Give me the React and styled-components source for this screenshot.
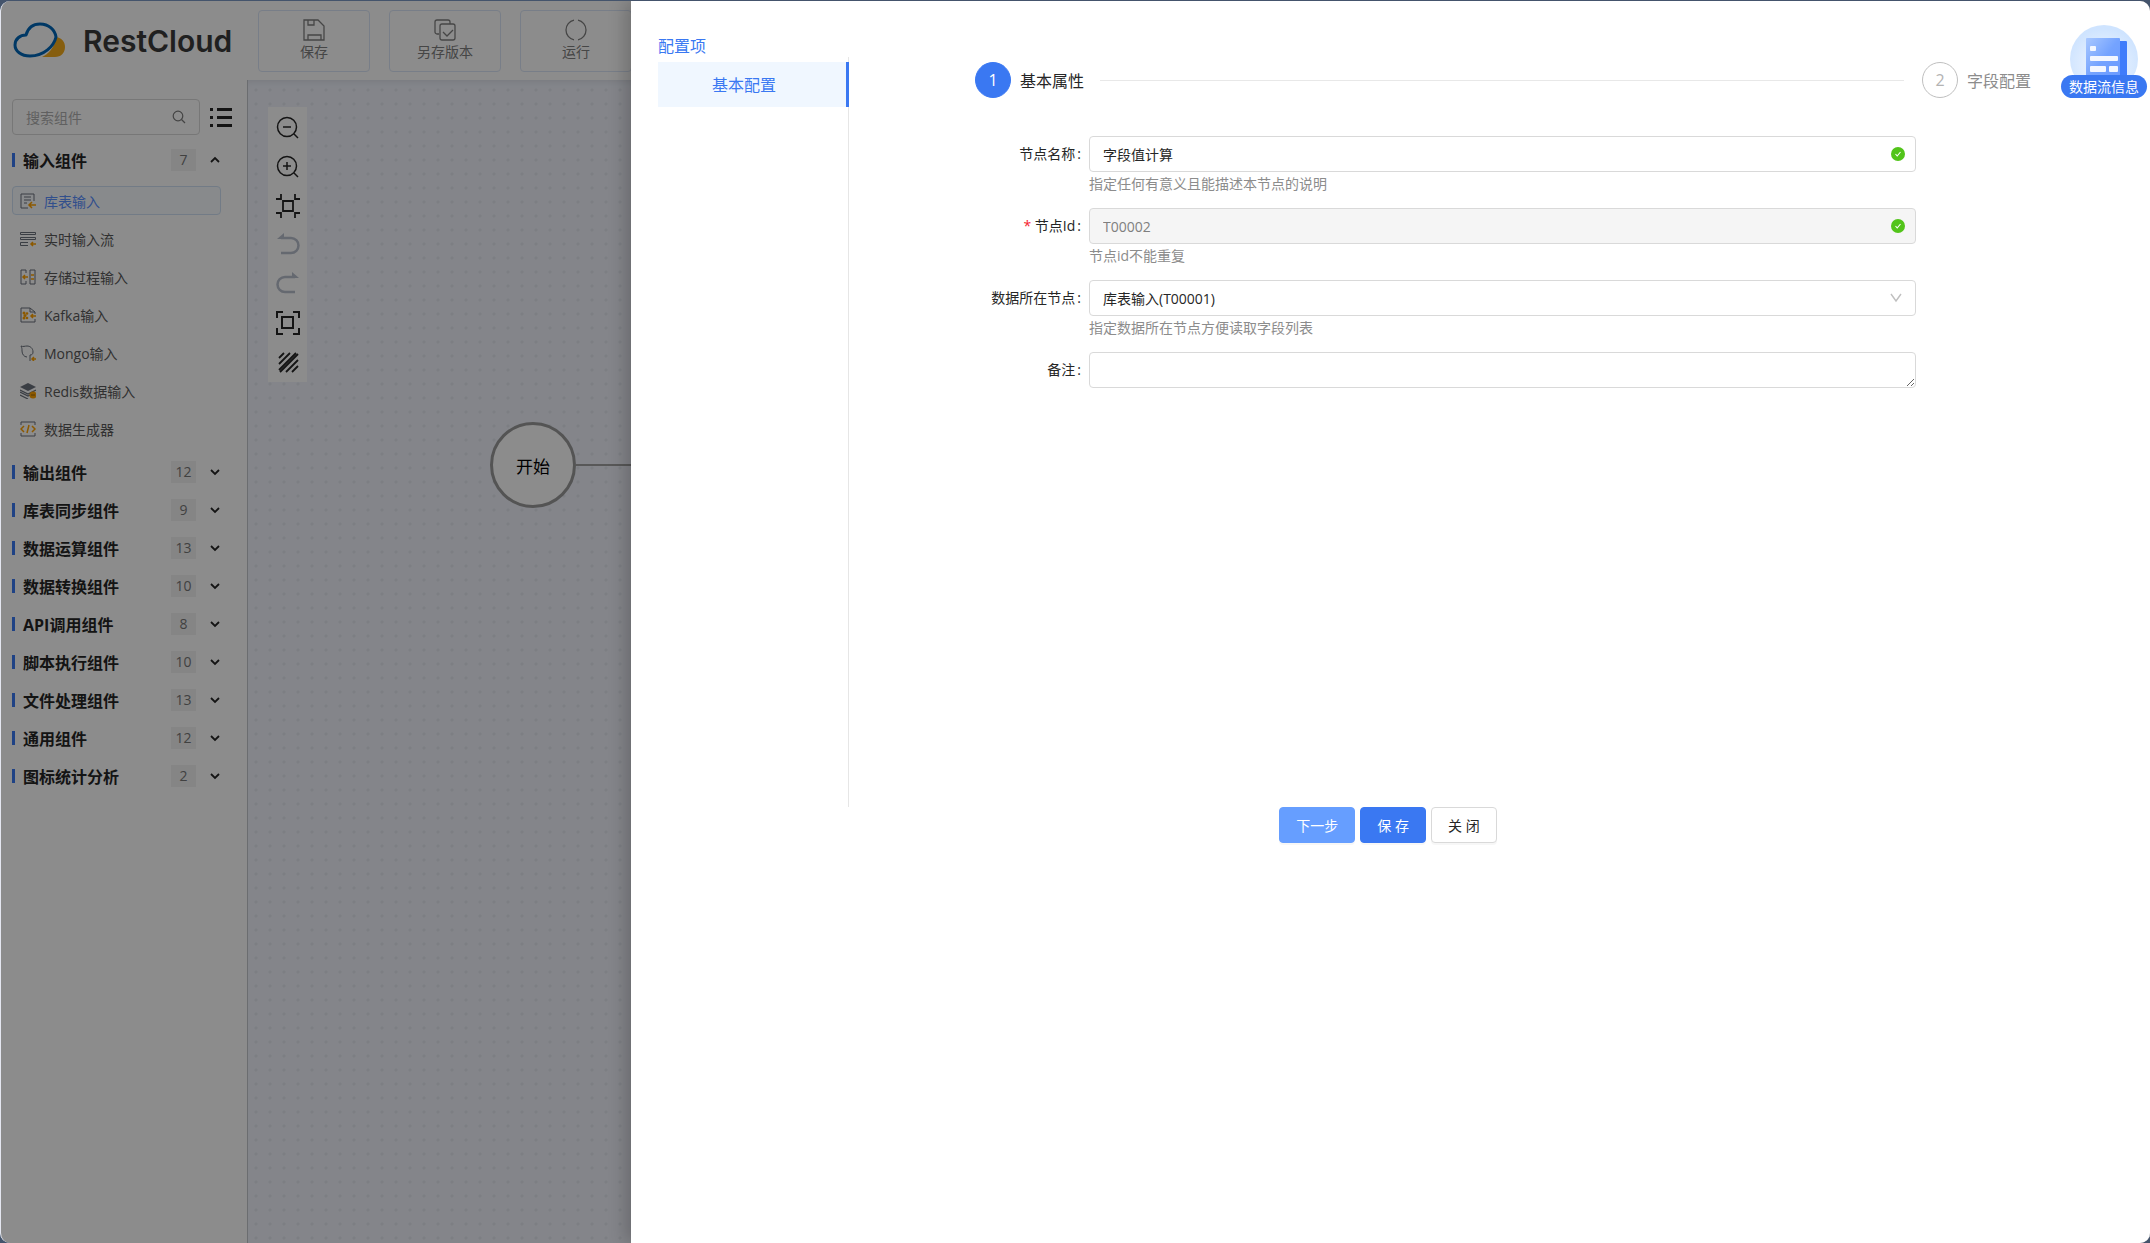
import React, { useState } from "react";
import styled, { createGlobalStyle } from "styled-components";

const BLUE = "#3a78f2";
const INK = "#6b717c";
const ORANGE = "#ffa200";

const GlobalStyle = createGlobalStyle`
  * {
    box-sizing: border-box;
  }
  body {
    margin: 0;
    background: #44546c;
  }
  body, button, input, select, textarea {
    font-family: "Open Sans", "Noto Sans CJK SC", sans-serif;
    font-size: 14px;
  }
  button {
    padding: 0;
    border: 0;
    background: none;
    cursor: pointer;
  }
`;

const Shell = styled.div`
  position: relative;
  display: flex;
  flex-direction: column;
  min-height: calc(100vh - 1px);
  margin-top: 1px;
  border-left: 1px solid #e4e6f0;
  border-radius: 10px;
  overflow: hidden;
  background: #fff;
`;

const Header = styled.header`
  display: flex;
  align-items: center;
  height: 79px;
  padding-left: 12px;
  overflow: hidden;
`;

const Brand = styled.a`
  display: flex;
  align-items: center;
  width: 245px;
  color: #3b3b3b;
  text-decoration: none;
  font-family: Inter, sans-serif;
  font-size: 30px;
  font-weight: 600;
  line-height: 40px;

  svg {
    margin-right: 16px;
  }
`;

const HeaderButton = styled.button`
  display: flex;
  flex: none;
  flex-direction: column;
  align-items: center;
  justify-content: center;
  width: 112px;
  height: 62px;
  margin-right: 19px;
  border: 1px solid #dbe6f7;
  border-radius: 4px;
  color: #808080;
  line-height: 22px;
`;

const Main = styled.div`
  display: flex;
  flex: 1;
`;

const Sidebar = styled.aside`
  flex: none;
  width: 247px;
  padding: 19px 26px 0 11px;
  border-right: 1px solid #c4c6cc;
`;

const SearchRow = styled.div`
  display: flex;
  align-items: center;
  width: 222px;
  height: 36px;
  margin-bottom: 6px;
`;

const SearchBox = styled.label`
  display: flex;
  align-items: center;
  width: 188px;
  height: 36px;
  padding: 0 13px;
  border: 1px solid #d9d9d9;
  border-radius: 4px;
  color: #7c7c7c;

  input {
    flex: 1;
    min-width: 0;
    padding: 0;
    border: 0;
    outline: 0;
    background: none;
  }
  input::placeholder {
    color: #b0b0b0;
  }
`;

const ListButton = styled.button`
  display: flex;
  margin-left: 10px;
`;

const GroupHead = styled.button`
  display: flex;
  align-items: center;
  width: 100%;
  height: 38px;
  font-size: 16px;
  font-weight: 700;
  color: #262626;
  text-align: left;

  &::before {
    content: "";
    width: 3px;
    height: 14px;
    margin-right: 8px;
    background: ${BLUE};
  }
  svg {
    margin: 0 1px 0 14px;
  }
`;

const GroupName = styled.span`
  flex: 1;
`;

const Count = styled.span`
  width: 25px;
  height: 22px;
  background: #f2f2f2;
  color: #777;
  font-size: 14px;
  font-weight: 400;
  line-height: 22px;
  text-align: center;
`;

const ItemList = styled.ul`
  display: flex;
  flex-direction: column;
  gap: 9px;
  margin: 7px 0 10px;
  padding: 0;
  list-style: none;
`;

const Item = styled.button`
  display: flex;
  align-items: center;
  gap: 8px;
  width: 100%;
  height: 29px;
  padding-left: 7px;
  border: 1px solid ${(p) => (p.$active ? "#cfe1f5" : "transparent")};
  border-radius: 4px;
  background: ${(p) => (p.$active ? "#f8fbff" : "none")};
  color: ${(p) => (p.$active ? "#5a90ff" : "#595959")};
`;

const Canvas = styled.main`
  position: relative;
  flex: 1;
  padding: 27px 20px;
  background-color: #f0f3fc;
  background-image: radial-gradient(circle, #e3e6ee 1px, transparent 2px);
  background-size: 14px 14px;
  background-position: 1px 3px;
  box-shadow: inset 0 6px 8px -6px rgba(0, 0, 0, 0.12);
`;

const Palette = styled.div`
  display: flex;
  flex-direction: column;
  align-items: center;
  gap: 15px;
  width: 39px;
  padding: 9px 0 8px;
  background: #fff;

  button {
    display: flex;
    color: #262626;
  }
  button:disabled {
    color: #b9bfcd;
  }
`;

const StartNode = styled.div`
  position: absolute;
  left: 242px;
  top: 342px;
  display: flex;
  align-items: center;
  justify-content: center;
  width: 86px;
  height: 86px;
  border: 3px solid #999;
  border-radius: 50%;
  background: #fff;
  color: #000;
  font-size: 17px;
`;

const Edge = styled.div`
  position: absolute;
  left: 328px;
  right: 0;
  top: 384px;
  height: 2px;
  background: #a0a0a0;
`;

const Mask = styled.div`
  position: absolute;
  inset: 0 0 0 -1px;
  background: rgba(0, 0, 0, 0.45);
`;

const Drawer = styled.section`
  position: absolute;
  top: 0;
  right: 0;
  bottom: 0;
  width: calc(100% - 630px);
  padding: 33px 27px 0;
  background: #fff;
  box-shadow: -6px 0 16px rgba(0, 0, 0, 0.2);
`;

const DrawerTitle = styled.h2`
  height: 23px;
  margin: 0;
  color: ${BLUE};
  font-size: 16px;
  font-weight: 400;
  line-height: 24px;
`;

const DrawerBody = styled.div`
  display: flex;
  min-height: 750px;
`;

const ConfigNav = styled.nav`
  flex: none;
  width: 191px;
  padding-top: 5px;
  border-right: 1px solid #e6e6e6;
`;

const ConfigTab = styled.a`
  display: block;
  height: 45px;
  margin-right: -1px;
  padding-right: 16px;
  border-right: 3px solid ${BLUE};
  background: #f0f7ff;
  color: ${BLUE};
  font-size: 16px;
  line-height: 46px;
  text-align: center;
  text-decoration: none;
`;

const Content = styled.div`
  flex: 1;
  padding-top: 5px;
`;

const Steps = styled.ol`
  display: flex;
  align-items: center;
  height: 36px;
  margin: 0 92px 38px 126px;
  padding: 0;
  list-style: none;
  font-size: 16px;
`;

const Step = styled.li`
  display: flex;
  align-items: center;
  gap: 9px;
  color: ${(p) => (p.$active ? "#262626" : "#8c8c8c")};
`;

const StepIcon = styled.span`
  width: 36px;
  height: 36px;
  border: 1px solid ${(p) => (p.$active ? BLUE : "#bfbfbf")};
  border-radius: 50%;
  background: ${(p) => (p.$active ? BLUE : "#fff")};
  color: ${(p) => (p.$active ? "#fff" : "#b3b3b3")};
  line-height: 34px;
  text-align: center;
`;

const StepLine = styled.li`
  flex: 1;
  height: 1px;
  margin: 0 18px 0 16px;
  background: #e8e8e8;
`;

const Form = styled.form`
  display: grid;
  gap: 12px;
  margin-right: 207px;
`;

const Row = styled.div`
  display: grid;
  grid-template-columns: 240px 1fr;
`;

const Label = styled.label`
  padding-right: 8px;
  color: #262626;
  line-height: 36px;
  text-align: right;

  &::before {
    content: ${(p) => (p.$required ? '"* "' : '""')};
    color: #f5222d;
  }
  &::after {
    content: ":";
    margin-left: 2px;
  }
`;

const Control = styled.div`
  position: relative;

  input, select, textarea {
    display: block;
    width: 100%;
    height: 36px;
    padding: 0 13px;
    border: 1px solid #d9d9d9;
    border-radius: 4px;
    outline: 0;
    background: #fff;
    color: #262626;
    appearance: none;
  }
  input:disabled {
    background: #f5f5f5;
    color: #7f7f7f;
  }
  textarea {
    padding: 6px 13px;
    resize: vertical;
  }
`;

const Suffix = styled.span`
  position: absolute;
  top: 11px;
  right: ${(p) => p.$right || 11}px;
  display: flex;
  pointer-events: none;
`;

const Hint = styled.div`
  color: #8c8c8c;
  line-height: 24px;
`;

const Footer = styled.footer`
  display: flex;
  justify-content: center;
`;

const Action = styled.button`
  height: 36px;
  margin-right: 5px;
  padding: 0 16px;
  border: 1px solid ${(p) => ({ next: "#669eff", save: BLUE })[p.$kind] || "#d9d9d9"};
  border-radius: 4px;
  background: ${(p) => ({ next: "#669eff", save: BLUE })[p.$kind] || "#fff"};
  color: ${(p) => (p.$kind ? "#fff" : "#262626")};
  box-shadow: 0 2px 0 rgba(0, 0, 0, 0.03);
`;

const FlowInfo = styled.button`
  position: absolute;
  top: 24px;
  right: 3px;
  display: flex;
  flex-direction: column;
  align-items: center;
  width: 86px;

  svg {
    margin-bottom: -18px;
  }
  span {
    z-index: 1;
    width: 86px;
    height: 23px;
    border-radius: 12px;
    background: ${BLUE};
    color: #fff;
    line-height: 23px;
  }
`;

const CloudLogo = () => (
  <svg width="54" height="38" viewBox="0 0 54 38" fill="none">
    <path d="M29 35c6-3 13-9 14-20 6 1 9 5 9 10 0 6-4 10-10 10z" fill="#f5ac1c" />
    <path
      d="M13 13C15 6 20 2 27 2c9 0 15 6 16 13-2 9-12 19-26 19C8 34 2 29 2 23c0-6 5-10 11-10z"
      fill="#fff"
      stroke="#0067b8"
      strokeWidth="3"
      strokeLinejoin="round"
    />
  </svg>
);

const headerIcons = {
  save: <path d="M1 1h14l6 6v14H1zM5 1v5h6V1M5 21v-5h13v5" />,
  copy: (
    <>
      <path d="M5 15H3a2 2 0 0 1-2-2V3a2 2 0 0 1 2-2h11a2 2 0 0 1 2 2v2" />
      <rect x="6" y="5" width="15" height="16" rx="2" />
      <path d="M9 13l4 4 6-6" />
    </>
  ),
  run: <path d="M9 1.2a10 10 0 0 0 0 19.6M13 1.2a10 10 0 0 1 0 19.6" />,
};

const itemIcons = {
  table: (
    <>
      <path d="M14 8V1H1v14h7M4 4h7M4 7h7M4 10h3" stroke={INK} />
      <path d="M16 12H9m3-3l-3 3 3 3" stroke={ORANGE} strokeWidth="1.5" />
    </>
  ),
  stream: (
    <>
      <path d="M.5 1.5h15v2H.5zM.5 6.5h15v2H.5zM8 11.5H.5v3H8" stroke={INK} />
      <path d="M16 13h-5m2-2l-2 2 2 2" stroke={ORANGE} strokeWidth="1.5" />
    </>
  ),
  proc: (
    <>
      <path d="M6 4V1H1v14h5v-3M10 1h5v14h-5z" stroke={INK} />
      <path d="M8 8H3m2-2L3 8l2 2M11 6h3M11 10h3" stroke={ORANGE} strokeWidth="1.5" />
    </>
  ),
  kafka: (
    <>
      <path d="M15 12v3H1V1h9l5 4v2M10 1v4h5" stroke={INK} />
      <path d="M16 9h-5m2-2l-2 2 2 2" stroke={ORANGE} strokeWidth="1.5" />
      <g fill={ORANGE}>
        <circle cx="4" cy="6" r="1.5" />
        <circle cx="4" cy="11" r="1.5" />
        <circle cx="7" cy="6.500" r="1.300" />
        <circle cx="7" cy="11" r="1.300" />
        <circle cx="5" cy="8.500" r="1.500" />
      </g>
    </>
  ),
  mongo: (
    <>
      <path d="M10 16v-6c2 0 3-1 3-3 0-4-3-6-6-6-2 0-4 1-6 0 1 2 1 3 1 5 0 3 2 6 5 6" stroke={INK} />
      <path d="M16 14h-4m2-2l-2 2 2 2" stroke={ORANGE} strokeWidth="1.5" />
    </>
  ),
  redis: (
    <>
      <path d="M0 4l8-4 8 4-8 4z" fill={INK} />
      <path d="M0 7l8 4 8-4M0 9l8 4 4-2M0 12l8 4" stroke={INK} strokeWidth="1.2" />
      <circle cx="13" cy="12" r="3.5" fill={ORANGE} />
      <path d="M15 12h-4" stroke="#9c6b12" />
    </>
  ),
  gen: (
    <>
      <path d="M1 4V1h14v3M1 12v3h14v-3" stroke={INK} />
      <path d="M4 5L1 8l3 3M12 5l3 3-3 3M9 4l-2 8" stroke={ORANGE} strokeWidth="1.5" />
    </>
  ),
};

const paletteTools = [
  {
    name: "缩小",
    icon: (
      <g stroke="currentColor" strokeWidth="1.5">
        <circle cx="11" cy="11" r="9.5" />
        <path d="M7 11h8M18 18l4 4" />
      </g>
    ),
  },
  {
    name: "放大",
    icon: (
      <g stroke="currentColor" strokeWidth="1.5">
        <circle cx="11" cy="11" r="9.5" />
        <path d="M7 11h8M11 7v8M18 18l4 4" />
      </g>
    ),
  },
  {
    name: "适应画布",
    icon: (
      <g stroke="currentColor" strokeWidth="1.8">
        <path d="M7 7h10v10H7zM0 5h5V0M19 0v5h5M24 19h-5v5M5 24v-5H0" />
      </g>
    ),
  },
  {
    name: "撤销",
    disabled: true,
    icon: (
      <>
        <path d="M5 5h10a7.5 7.5 0 0 1 0 15H5" stroke="currentColor" strokeWidth="2.5" />
        <path d="M1 6l7-6v6z" fill="currentColor" />
      </>
    ),
  },
  {
    name: "重做",
    disabled: true,
    icon: (
      <>
        <path d="M19 5H9a7.5 7.5 0 0 0 0 15h10" stroke="currentColor" strokeWidth="2.5" />
        <path d="M23 6l-7-6v6z" fill="currentColor" />
      </>
    ),
  },
  {
    name: "实际尺寸",
    icon: (
      <g stroke="currentColor" strokeWidth="2">
        <path d="M6 6h11v11H6zM1 7V1h6M17 1h6v6M23 17v6h-6M7 23H1v-6" />
      </g>
    ),
  },
  {
    name: "网格",
    icon: (
      <g stroke="currentColor" strokeWidth="1.8">
        <path d="M3 8l5-5M3 14L14 3M3 20L20 3M4 22L22 4M10 22l12-12M16 22l6-6" />
      </g>
    ),
  },
];

const headerButtons = [
  { name: "保存", icon: "save" },
  { name: "另存版本", icon: "copy" },
  { name: "运行", icon: "run" },
];

const inputItems = [
  { name: "库表输入", icon: "table" },
  { name: "实时输入流", icon: "stream" },
  { name: "存储过程输入", icon: "proc" },
  { name: "Kafka输入", icon: "kafka" },
  { name: "Mongo输入", icon: "mongo" },
  { name: "Redis数据输入", icon: "redis" },
  { name: "数据生成器", icon: "gen" },
];

const groups = [
  { name: "输入组件", count: 7, items: inputItems },
  { name: "输出组件", count: 12 },
  { name: "库表同步组件", count: 9 },
  { name: "数据运算组件", count: 13 },
  { name: "数据转换组件", count: 10 },
  { name: "API调用组件", count: 8 },
  { name: "脚本执行组件", count: 10 },
  { name: "文件处理组件", count: 13 },
  { name: "通用组件", count: 12 },
  { name: "图标统计分析", count: 2 },
];

const Chevron = ({ up }) => (
  <svg width="10" height="10" viewBox="0 0 10 10" fill="none" stroke="currentColor" strokeWidth="1.8">
    <path d={up ? "M1 7l4-4 4 4" : "M1 3l4 4 4-4"} />
  </svg>
);

const SuccessMark = () => (
  <Suffix>
    <svg width="14" height="14" viewBox="0 0 14 14" fill="none">
      <circle cx="7" cy="7" r="7" fill="#52c41a" />
      <path d="M4.500 7l1.700 2 3.300-4" stroke="#fff" strokeWidth="1.1" />
    </svg>
  </Suffix>
);

const FlowInfoArt = () => (
  <svg width="68" height="68" viewBox="0 0 68 68">
    <defs>
      <radialGradient id="halo" cx="0.5" cy="0.6" r="0.55">
        <stop offset="0" stopColor="#f4f8ff" />
        <stop offset="1" stopColor="#cfe4ff" />
      </radialGradient>
      <linearGradient id="sheet" x1="0" y1="0" x2="1" y2="1">
        <stop offset="0" stopColor="#a9c8ff" />
        <stop offset="0.5" stopColor="#74a3ff" />
        <stop offset="1" stopColor="#6a9aff" />
      </linearGradient>
    </defs>
    <circle cx="34" cy="34" r="34" fill="url(#halo)" />
    <rect x="46" y="16" width="11" height="40" rx="1" fill="#3f7cfb" />
    <rect x="16" y="13" width="34" height="43" rx="1" fill="url(#sheet)" />
    <g fill="#f3f7ff">
      <rect x="20" y="21" width="6" height="5" rx="1" />
      <rect x="20" y="31" width="28" height="5" rx="1" />
      <rect x="20" y="41" width="16" height="6" rx="1" />
      <rect x="39" y="41" width="9" height="6" rx="1" />
    </g>
  </svg>
);

const ComponentSidebar = () => {
  const [active, setActive] = useState("库表输入");
  const [open, setOpen] = useState("输入组件");

  return (
    <Sidebar>
      <SearchRow>
        <SearchBox>
          <input type="text" placeholder="搜索组件" aria-label="搜索组件" />
          <svg width="14" height="14" viewBox="0 0 14 14" fill="none" stroke="currentColor" strokeWidth="1.2">
            <circle cx="6" cy="6" r="4.8" />
            <path d="M9.5 9.5L13 13" />
          </svg>
        </SearchBox>
        <ListButton aria-label="列表">
          <svg width="22" height="20" viewBox="0 0 22 20" fill="#262626">
            <path d="M0 1h3v3H0zM7 1h15v3H7zM0 9h3v3H0zM7 9h15v3H7zM0 17h3v3H0zM7 17h15v3H7z" />
          </svg>
        </ListButton>
      </SearchRow>
      {groups.map((group) => (
        <div key={group.name}>
          <GroupHead onClick={() => setOpen(open === group.name ? "" : group.name)}>
            <GroupName>{group.name}</GroupName>
            <Count>{group.count}</Count>
            <Chevron up={open === group.name} />
          </GroupHead>
          {open === group.name && group.items && (
            <ItemList>
              {group.items.map((item) => (
                <li key={item.name}>
                  <Item $active={active === item.name} onClick={() => setActive(item.name)}>
                    <svg width="16" height="16" viewBox="0 0 16 16" fill="none">
                      {itemIcons[item.icon]}
                    </svg>
                    {item.name}
                  </Item>
                </li>
              ))}
            </ItemList>
          )}
        </div>
      ))}
    </Sidebar>
  );
};

const NodeForm = () => (
  <Form>
    <Row>
      <Label htmlFor="nodeName">节点名称</Label>
      <Control>
        <input id="nodeName" type="text" defaultValue="字段值计算" />
        <SuccessMark />
        <Hint>指定任何有意义且能描述本节点的说明</Hint>
      </Control>
    </Row>
    <Row>
      <Label htmlFor="nodeId" $required>节点Id</Label>
      <Control>
        <input id="nodeId" type="text" defaultValue="T00002" disabled />
        <SuccessMark />
        <Hint>节点id不能重复</Hint>
      </Control>
    </Row>
    <Row>
      <Label htmlFor="sourceNode">数据所在节点</Label>
      <Control>
        <select id="sourceNode">
          <option>库表输入(T00001)</option>
        </select>
        <Suffix $right={14}>
          <svg width="12" height="14" viewBox="0 0 12 14" fill="none" stroke="#bfbfbf" strokeWidth="1.4">
            <path d="M1 3l5 7 5-7" />
          </svg>
        </Suffix>
        <Hint>指定数据所在节点方便读取字段列表</Hint>
      </Control>
    </Row>
    <Row>
      <Label htmlFor="remark">备注</Label>
      <Control>
        <textarea id="remark" rows="1" />
      </Control>
    </Row>
  </Form>
);

const App = () => {
  return (
    <>
      <GlobalStyle />
      <Shell>
        <Header>
          <Brand href="#">
            <CloudLogo />
            RestCloud
          </Brand>
          {headerButtons.map((button) => (
            <HeaderButton key={button.name}>
              <svg width="22" height="22" viewBox="0 0 22 22" fill="none" stroke="currentColor" strokeWidth="1.3">
                {headerIcons[button.icon]}
              </svg>
              {button.name}
            </HeaderButton>
          ))}
        </Header>
        <Main>
          <ComponentSidebar />
          <Canvas>
            <Palette>
              {paletteTools.map((tool) => (
                <button key={tool.name} aria-label={tool.name} disabled={tool.disabled}>
                  <svg width="24" height="24" viewBox="0 0 24 24" fill="none">
                    {tool.icon}
                  </svg>
                </button>
              ))}
            </Palette>
            <Edge />
            <StartNode>开始</StartNode>
          </Canvas>
        </Main>
        <Mask />
        <Drawer>
          <DrawerTitle>配置项</DrawerTitle>
          <DrawerBody>
            <ConfigNav>
              <ConfigTab href="#">基本配置</ConfigTab>
            </ConfigNav>
            <Content>
              <Steps>
                <Step $active>
                  <StepIcon $active>1</StepIcon>
                  基本属性
                </Step>
                <StepLine />
                <Step>
                  <StepIcon>2</StepIcon>
                  字段配置
                </Step>
              </Steps>
              <NodeForm />
            </Content>
          </DrawerBody>
          <Footer>
            <Action $kind="next">下一步</Action>
            <Action $kind="save">保 存</Action>
            <Action>关 闭</Action>
          </Footer>
          <FlowInfo>
            <FlowInfoArt />
            <span>数据流信息</span>
          </FlowInfo>
        </Drawer>
      </Shell>
    </>
  );
};

export default App;
